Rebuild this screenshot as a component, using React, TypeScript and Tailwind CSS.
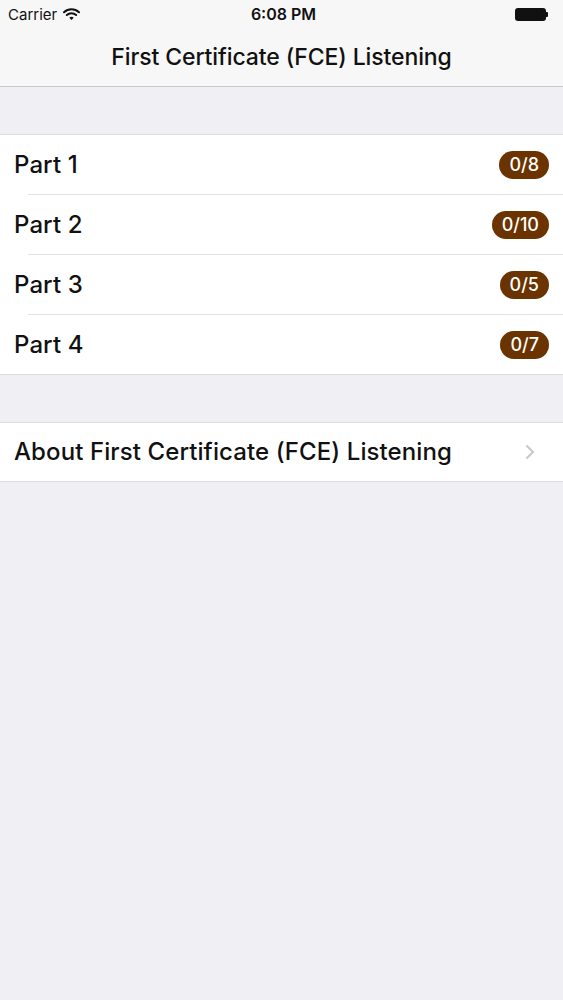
import React from "react";

const parts = [
  { name: "Part 1", badge: "0/8" },
  { name: "Part 2", badge: "0/10" },
  { name: "Part 3", badge: "0/5" },
  { name: "Part 4", badge: "0/7" },
];

export default function App() {
  return (
    <div
      className="w-[563px] h-[1000px] bg-[#efeff4] flex flex-col"
      style={{ fontFamily: "Inter, 'Noto Sans', sans-serif" }}
    >
      {/* Status + nav */}
      <div className="bg-[#f7f7f7] border-b border-[#c8c7cc]">
        <div className="h-[28px] flex items-center px-[8px] relative text-[#111]">
          <div className="flex items-center gap-[6px]">
            <span className="text-[15px] leading-none">Carrier</span>
            <svg width="17" height="12" viewBox="0 0 17 12">
              <path d="M1 4.2 A11 11 0 0 1 16 4.2" stroke="#111" strokeWidth="2" fill="none" strokeLinecap="round" />
              <path d="M3.8 7 A7 7 0 0 1 13.2 7" stroke="#111" strokeWidth="2" fill="none" strokeLinecap="round" />
              <path d="M6.3 9.8 L8.5 12 L10.7 9.8 A3.2 3.2 0 0 0 6.3 9.8 Z" fill="#111" />
            </svg>
          </div>
          <div className="absolute left-[4px] right-0 text-center text-[16px] font-semibold leading-none pointer-events-none">
            6:08 PM
          </div>
          <div className="ml-auto flex items-center mr-[7px]">
            <div className="w-[31px] h-[13px] rounded-[3px] bg-[#111]" />
            <div className="w-[2px] h-[5px] bg-[#111] rounded-r-[1px]" />
          </div>
        </div>
        <div className="h-[58px] flex items-center justify-center">
          <span className="text-[23px] font-medium text-[#111] tracking-[-0.1px]">
            First Certificate (FCE) Listening
          </span>
        </div>
      </div>

      <div className="h-[47px]" />

      <div className="bg-white border-y border-[#dcdce0]">
        {parts.map((p, i) => (
          <div key={p.name}>
            {i > 0 && <div className="ml-[28px] h-px bg-[#e3e3e6]" />}
            <div className="flex items-center h-[59px] px-[14px]">
              <span className="text-[24px] font-medium text-[#111] tracking-[0.1px]">{p.name}</span>
              <span className="ml-auto h-[28px] px-[10px] rounded-full bg-[#6a3300] text-white text-[18px] font-medium flex items-center">
                {p.badge}
              </span>
            </div>
          </div>
        ))}
      </div>

      <div className="h-[47px]" />

      <div className="bg-white border-y border-[#dcdce0] h-[60px] flex items-center px-[14px]">
        <span className="text-[24px] font-medium text-[#111] tracking-[0.1px]">
          About First Certificate (FCE) Listening
        </span>
        <svg className="ml-auto mr-[14px]" width="10" height="16" viewBox="0 0 10 16">
          <path d="M1.5 1.5 L8 8 L1.5 14.5" stroke="#c7c7cc" strokeWidth="2" fill="none" />
        </svg>
      </div>
    </div>
  );
}
